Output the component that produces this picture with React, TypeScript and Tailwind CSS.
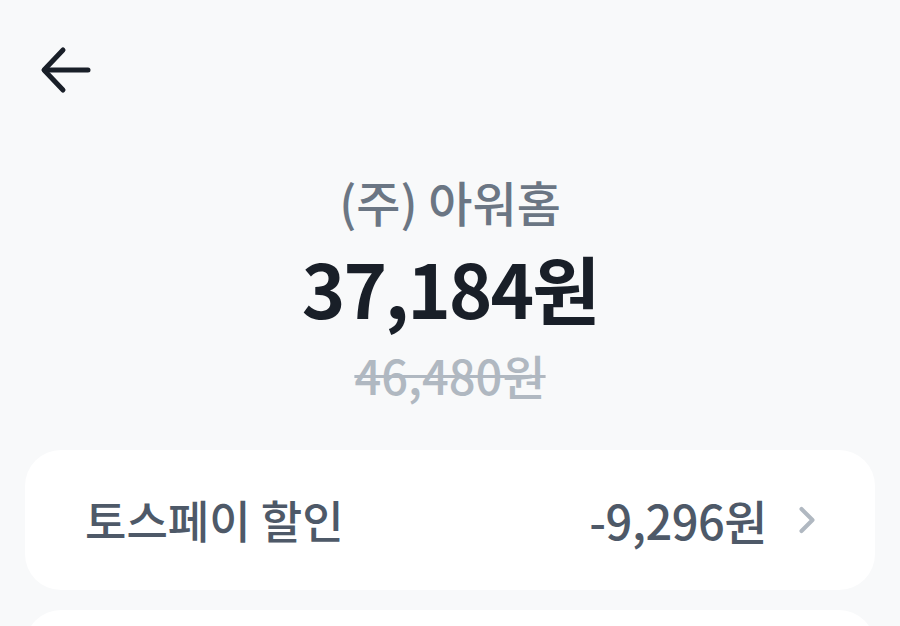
import { ChevronRight } from "lucide-react";

const font = { fontFamily: '"Noto Sans CJK KR", "Noto Sans", sans-serif' };

export default function App() {
  return (
    <div className="h-[626px] w-full overflow-hidden bg-[#f8f9fa]" style={font}>
      {/* header */}
      <div className="flex h-[140px] items-start px-[40px] pt-[46px]">
        <svg width="52" height="48" viewBox="0 0 52 48" fill="none" stroke="#191f28" strokeWidth="5" strokeLinecap="round" strokeLinejoin="round">
          <path d="M48 24H5" />
          <path d="M23 4L4 24l19 20" />
        </svg>
      </div>

      {/* summary */}
      <div className="mt-[31px] flex flex-col items-center">
        <div className="text-[48px] font-medium leading-[60px] text-[#6b7684]">(주) 아워홈</div>
        <div className="mt-[14px] text-[74px] font-bold leading-[84px] tracking-[-2px] text-[#191f28]">37,184원</div>
        <div className="mt-[18px] text-[47px] font-medium leading-[56px] text-[#b0b8c1] line-through decoration-[3px]">46,480원</div>
      </div>

      {/* cards */}
      <div className="mt-[47px] flex flex-col gap-[20px] px-[25px]">
        <div className="flex h-[140px] items-center rounded-[36px] bg-white pl-[60px] pr-[46px]">
          <span className="text-[45px] font-medium text-[#4e5968]">토스페이 할인</span>
          <span className="ml-auto mr-[3px] text-[47px] font-medium tracking-[-0.5px] text-[#4e5968]">-9,296원</span>
          <ChevronRight className="ml-[15px] text-[#b0b8c1]" size={44} strokeWidth={2.2} />
        </div>
        <div className="h-[140px] rounded-[36px] bg-white" />
      </div>
    </div>
  );
}
